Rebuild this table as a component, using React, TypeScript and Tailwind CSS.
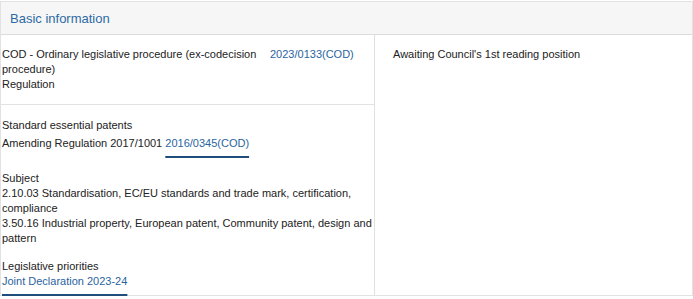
import React from "react";

export default function App() {
  const link = "text-[#2a64a0]";
  const ul = "underline decoration-2 decoration-[#1f4e7c] underline-offset-[9px]";
  return (
    <div className="w-[693px] h-[299px] bg-white pt-[1px] font-['Liberation_Sans',Arial,sans-serif] text-[11px] leading-[15px] text-[#222]">
      <div className="w-[693px] border border-[#e2e2e2]">
        <div className="h-[33px] bg-[#f6f6f6] border-b border-[#dcdcdc] px-[9px] flex items-center text-[13px] text-[#2d6aa3]">
          Basic information
        </div>
        <div className="grid grid-cols-[374px_1fr]">
          <div className="border-r border-[#e0e0e0]">
            <div className="h-[70px] border-b border-[#e2e2e2] grid grid-cols-[268px_1fr] pt-[12px] pl-[1px]">
              <div>
                <div>COD - Ordinary legislative procedure (ex-codecision procedure)</div>
                <div>Regulation</div>
              </div>
              <div className={link}>2023/0133(COD)</div>
            </div>
            <div className="h-[190px] pt-[13px] pl-[1px]">
              <div>Standard essential patents</div>
              <div className="mt-[3px]">
                Amending Regulation 2017/1001 <span className={`${link} ${ul}`}>2016/0345(COD)</span>
              </div>
              <div className="mt-[20px]">Subject</div>
              <div>2.10.03 Standardisation, EC/EU standards and trade mark, certification, compliance</div>
              <div>3.50.16 Industrial property, European patent, Community patent, design and pattern</div>
              <div className="mt-[13px]">Legislative priorities</div>
              <div>
                <span className={`${link} ${ul}`}>Joint Declaration 2023-24</span>
              </div>
            </div>
          </div>
          <div className="pt-[12px] pl-[18px]">Awaiting Council's 1st reading position</div>
        </div>
      </div>
    </div>
  );
}
